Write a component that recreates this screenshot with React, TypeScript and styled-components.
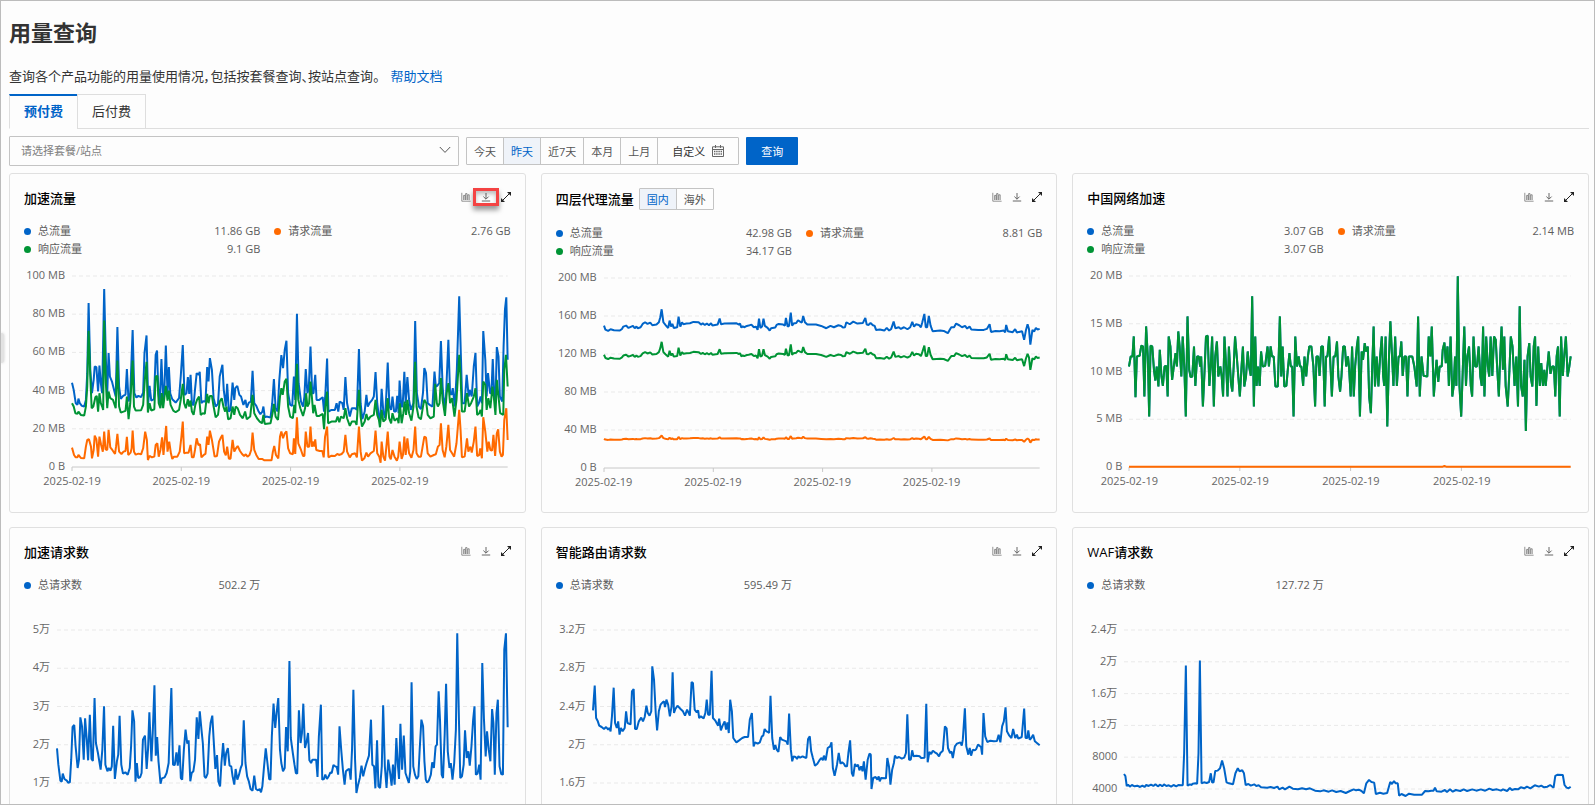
import React, { useState } from "react";
import styled, { createGlobalStyle } from "styled-components";

const BLUE = "#0064c8";
const GREEN = "#009435";
const ORANGE = "#ff6a00";

const GlobalStyle = createGlobalStyle`
  *, *::before, *::after { box-sizing: border-box; }
  body {
    margin: 0;
    background: #fdfdfd;
    color: #333;
    font-family: "Open Sans", "Noto Sans CJK SC", sans-serif;
    font-size: 11px;
    line-height: 18px;
  }
  button, select { font-family: inherit; }
`;

const Page = styled.main`
  position: relative;
  height: 100vh;
  overflow: hidden;
  border: 1px solid #bcbcbc;
  padding: 16px 5px 0 8px;
`;

const DrawerHandle = styled.span`
  position: absolute;
  left: 0;
  top: 332px;
  width: 3px;
  height: 30px;
  border-radius: 0 3px 3px 0;
  background: #e2e2e2;
  box-shadow: 0 0 3px rgba(0, 0, 0, 0.2);
`;

const PageTitle = styled.h1`
  margin: 0;
  font-size: 22px;
  line-height: 30px;
  font-weight: 700;
`;

const Description = styled.p`
  margin: 19px 0 0;
  font-size: 13px;
  line-height: 20px;
  font-feature-settings: "palt";
`;

const HelpLink = styled.a`
  margin-left: 11px;
  color: ${BLUE};
  text-decoration: none;
`;

const Tabs = styled.div`
  display: flex;
  margin-top: 8px;
  border-bottom: 1px solid #dedede;
`;

const Tab = styled.button<{ $active: boolean }>`
  height: 35px;
  margin-bottom: -1px;
  padding: 0 14px 3px;
  border: 1px solid #dedede;
  border-top: ${(p) => (p.$active ? `2px solid ${BLUE}` : "1px solid #dedede")};
  border-right-width: ${(p) => (p.$active ? "0" : "1px")};
  border-bottom-color: ${(p) => (p.$active ? "#fdfdfd" : "#dedede")};
  background: #fdfdfd;
  color: ${(p) => (p.$active ? BLUE : "#333")};
  font-size: 13px;
  font-weight: ${(p) => (p.$active ? 700 : 400)};
`;

const Toolbar = styled.div`
  display: flex;
  align-items: center;
  gap: 7px;
  margin-top: 7px;
`;

const SelectBox = styled.label`
  position: relative;
  flex: 0 1 450px;
  display: flex;
  svg {
    position: absolute;
    right: 8px;
    top: 8px;
    pointer-events: none;
  }
`;

const Select = styled.select`
  width: 100%;
  height: 30px;
  padding: 0 11px 1px;
  border: 1px solid #c4c4c4;
  border-radius: 1px;
  appearance: none;
  background: #fdfdfd;
  color: #808080;
  font-size: 11px;
`;

const ButtonGroup = styled.div`
  display: flex;
  border: 1px solid #c4c4c4;
  border-radius: 1px;
`;

const GroupButton = styled.button<{ $active?: boolean; $small?: boolean; $wide?: boolean }>`
  display: flex;
  align-items: center;
  gap: 7px;
  height: ${(p) => (p.$small ? "20px" : "26px")};
  padding: ${(p) => (p.$wide ? "0 14px" : "0 7px")};
  border: 0;
  background: ${(p) => (p.$active ? "#eff3f9" : "#fdfdfd")};
  color: ${(p) => (p.$active ? BLUE : p.$wide ? "#333" : "#555")};
  font-size: 11px;
  white-space: nowrap;
  & + & { border-left: 1px solid #c4c4c4; }
`;

const QueryButton = styled.button`
  height: 28px;
  padding: 0 15px;
  border: 0;
  border-radius: 1px;
  background: ${BLUE};
  color: #fff;
  font-size: 11px;
`;

const CardGrid = styled.section`
  display: grid;
  grid-template-columns: repeat(3, minmax(0, 1fr));
  gap: 14px 15px;
  margin-top: 7px;
`;

const Card = styled.article`
  min-height: 340px;
  padding: 14px 14px 21px;
  border: 1px solid #e0e0e0;
  border-radius: 3px;
`;

const CardHeader = styled.header`
  display: flex;
  align-items: flex-start;
`;

const CardHeading = styled.div`
  display: flex;
  align-items: center;
  gap: 5px;
  flex: 1;
`;

const CardTitle = styled.h2`
  margin: 0;
  color: #000;
  font-size: 13px;
  line-height: 20px;
  font-weight: 500;
`;

const Actions = styled.div`
  display: flex;
  gap: 10px;
`;

const IconButton = styled.button`
  position: relative;
  display: flex;
  align-items: center;
  justify-content: center;
  width: 10px;
  height: 18px;
  padding: 0;
  border: 0;
  background: none;
  color: #666;
  svg { flex: none; }
`;

const Highlight = styled.span`
  position: absolute;
  inset: 0 -8px;
  border: 3px solid #f44343;
  box-shadow: 0 4px 5px rgba(0, 0, 0, 0.4), inset 0 3px 4px rgba(0, 0, 0, 0.25);
`;

const Legend = styled.ul`
  display: grid;
  grid-template-columns: 1fr 1fr;
  grid-auto-rows: 18px;
  column-gap: 14px;
  min-height: 36px;
  margin: 14px 0 0;
  padding: 0;
  list-style: none;
  color: #5c5c5c;
`;

const LegendItem = styled.li`
  display: flex;
  align-items: center;
`;

const Dot = styled.span<{ $color: string }>`
  width: 7px;
  height: 7px;
  margin-right: 7px;
  border-radius: 50%;
  background: ${(p) => p.$color};
`;

const LegendValue = styled.span`
  margin-left: auto;
`;

const ChartGrid = styled.div<{ $axis: number }>`
  display: grid;
  grid-template-columns: ${(p) => p.$axis}px 1fr;
  margin: 18px 3px 0 0;
  color: #666;
`;

const YAxis = styled.div`
  display: flex;
  flex-direction: column;
  justify-content: space-between;
  margin: -9px 0 -7px;
  padding-right: 7px;
  text-align: right;
  line-height: 16px;
  white-space: nowrap;
`;

const Plot = styled.svg`
  display: block;
  width: 100%;
  overflow: visible;
`;

const XAxis = styled.div`
  grid-column: 2;
  display: grid;
  grid-template-columns: repeat(3, 72fr) 71fr;
  margin-top: 6px;
  line-height: 16px;
`;

const XLabel = styled.span`
  display: flex;
  justify-content: center;
  width: 0;
  white-space: nowrap;
`;

const BarsIcon = () => (
  <svg width="10" height="10" viewBox="0 0 10 10" fill="none" stroke="currentColor" strokeWidth="0.7">
    <path d="M0.8 0.8V9.2H9.6" />
    <path d="M2.6 8V3.4H4V8M4.6 8V1.6H6V8M6.8 8V2.8H8.2V8" />
  </svg>
);

const DownloadIcon = () => (
  <svg width="10" height="10" viewBox="0 0 10 10" fill="none" stroke="currentColor">
    <path d="M5 1V7M2.4 4.6L5 7.2L7.6 4.6M0.8 9H9.2" />
  </svg>
);

const ExpandIcon = () => (
  <svg width="12" height="12" viewBox="0 0 12 12" fill="#222" stroke="#222">
    <path d="M2 10L10 2" />
    <path d="M7 1H11V5ZM1 7V11H5Z" stroke="none" />
  </svg>
);

const CalendarIcon = () => (
  <svg width="12" height="12" viewBox="0 0 12 12" fill="none" stroke="#666">
    <path d="M0.5 1.8H11.5V11.5H0.5ZM0.5 4.5H11.5M3.5 0V3M8.5 0V3" />
    <path d="M2 6.5H10M2 9H10" strokeWidth="1.4" strokeDasharray="1.4 0.8" />
  </svg>
);

const ChevronIcon = () => (
  <svg width="12" height="12" viewBox="0 0 12 12" fill="none" stroke="#555">
    <path d="M0.8 3L6 8.4L11.2 3" />
  </svg>
);

type Line = { color: string; points: string };

type ChartSpec = {
  /* Plot extent in the units of the points: left, top, width, height. */
  extent: [number, number, number, number];
  height: number;
  axis: number;
  labels: string[];
  dates?: boolean;
  lines: Line[];
};

type Metric = { name: string; value: string; color: string };

type CardSpec = { title: string; regions?: boolean; marked?: boolean; metrics: Metric[]; chart: ChartSpec };

/* Scales a series towards the zero line at the given height. */
const share = (points: string, zero: number, ratio: number) =>
  points
    .split(" ")
    .map((pair) => {
      const [x, y] = pair.split(",").map(Number);
      return `${x},${Math.round((zero - (zero - y) * ratio) * 10) / 10}`;
    })
    .join(" ");

const trafficTotal =
  "214,369 219,390 225,430 230,435 233,416 237,430 243,438 250,440 255,420 259,340 263,130 268,330 273,400 278,360 281,320 286,322 291,395 295,317 299,370 303,400 309,88 314,300 318,400 322,280 326,350 332,365 338,390 343,410 348,202 353,380 358,417 365,408 372,404 376,328 381,425 386,400 393,211 398,400 404,413 410,408 418,412 424,398 428,280 434,227 439,430 443,378 448,422 456,418 461,285 465,272 469,400 473,430 478,298 483,420 487,380 491,257 496,400 500,322 504,400 510,418 520,428 530,415 535,350 541,256 546,405 552,400 556,352 560,402 564,345 568,432 573,436 577,390 582,340 588,345 591,336 596,430 601,424 608,425 613,322 617,365 621,295 627,330 632,415 638,440 645,432 650,350 658,315 662,390 668,440 672,372 677,455 682,450 688,368 693,420 696,385 702,378 708,405 713,410 720,435 726,420 730,443 736,428 742,425 747,333 752,430 758,438 765,455 770,463 776,455 779,440 783,472 788,470 800,473 805,430 810,358 815,445 821,455 826,360 832,286 837,325 842,270 847,243 852,400 858,435 864,438 869,350 873,420 878,162 883,370 890,425 896,440 900,410 904,328 909,400 913,385 918,260 923,400 927,400 932,345 936,420 944,420 950,415 954,412 958,455 962,400 967,296 971,455 980,450 990,450 995,430 1000,455 1004,425 1012,430 1016,450 1021,352 1026,430 1034,470 1040,445 1050,445 1055,450 1061,268 1066,430 1071,478 1078,455 1083,405 1087,440 1092,430 1100,420 1105,410 1110,337 1115,430 1120,470 1124,480 1128,387 1133,455 1138,475 1142,400 1146,308 1151,440 1156,450 1160,410 1165,455 1170,455 1174,408 1178,460 1181,362 1186,440 1190,440 1195,336 1199,430 1204,352 1209,420 1214,450 1222,430 1227,184 1232,400 1238,440 1244,448 1250,400 1254,325 1259,340 1264,430 1270,435 1278,440 1284,335 1288,380 1292,378 1298,370 1303,244 1308,380 1313,440 1318,410 1325,240 1330,400 1334,405 1338,385 1344,440 1350,330 1357,110 1362,290 1366,430 1373,430 1379,345 1385,410 1388,390 1394,410 1400,320 1405,279 1410,440 1415,430 1420,410 1424,430 1428,214 1434,300 1438,410 1442,340 1448,400 1452,400 1456,298 1460,400 1464,430 1468,262 1473,290 1477,410 1484,425 1488,260 1492,150 1496,113 1500,300";

const trafficRequest =
  "214,563 220,585 225,592 230,592 233,585 240,594 250,595 255,560 259,540 264,538 270,560 273,595 278,570 281,527 286,538 291,590 295,530 300,555 305,575 309,515 313,568 318,570 322,510 327,562 333,570 341,582 344,560 348,522 353,575 360,582 366,575 372,573 376,531 380,585 387,578 390,565 393,512 397,575 402,584 410,581 418,583 424,565 430,515 435,540 438,600 443,588 450,592 457,590 461,555 466,550 470,590 475,570 480,532 484,585 488,540 492,498 496,575 501,545 506,580 510,597 515,590 525,590 532,575 537,530 541,485 545,580 552,578 558,578 564,555 568,592 573,592 577,570 582,535 587,555 592,553 596,592 603,585 608,582 613,530 617,555 621,512 627,540 635,590 642,588 648,545 654,532 658,525 663,575 668,586 672,560 677,596 682,596 688,540 693,575 698,565 703,558 710,573 716,582 722,588 727,583 732,590 738,585 743,570 747,518 752,570 758,585 765,597 775,597 782,601 803,601 807,575 811,558 816,585 823,595 828,530 832,515 837,535 842,520 847,514 852,565 858,580 866,583 869,535 873,582 878,472 882,550 890,570 896,588 900,588 904,515 909,560 914,560 918,500 922,560 927,545 929,560 932,538 935,570 945,573 953,573 957,592 961,530 967,500 971,592 980,587 990,588 997,582 1002,585 1010,582 1016,575 1021,525 1026,575 1034,592 1040,583 1050,580 1055,592 1061,500 1066,575 1070,602 1077,595 1083,578 1088,590 1095,580 1105,573 1110,512 1115,580 1121,590 1125,608 1128,545 1133,590 1138,602 1142,560 1146,515 1151,590 1155,598 1160,570 1166,590 1173,602 1177,590 1181,545 1187,597 1191,585 1195,530 1199,585 1204,535 1209,580 1216,593 1222,570 1227,500 1231,580 1237,590 1244,590 1249,560 1254,530 1259,533 1264,580 1272,590 1282,585 1288,583 1294,560 1299,555 1303,490 1308,570 1314,592 1319,560 1325,495 1330,570 1336,580 1342,590 1349,550 1357,450 1361,510 1365,592 1373,590 1380,535 1384,575 1390,560 1394,578 1400,545 1405,500 1410,588 1416,585 1419,565 1424,595 1428,472 1434,515 1440,575 1444,545 1449,570 1454,572 1458,525 1463,588 1468,520 1472,508 1477,575 1482,590 1486,585 1490,480 1496,445 1500,540";

const trafficResponse =
  "214,430 219,440 224,460 230,462 233,455 240,465 250,467 255,440 259,380 263,213 268,350 272,445 277,440 283,412 287,408 291,455 295,400 299,430 303,440 306,450 309,182 314,370 318,445 322,395 327,415 335,420 343,445 348,302 353,440 358,458 372,453 376,410 381,478 386,430 393,302 397,440 402,452 418,451 424,435 429,360 434,306 438,458 443,430 448,452 457,448 461,350 466,348 470,430 475,445 479,400 483,445 487,410 491,378 496,422 500,392 505,435 513,452 520,457 530,450 535,420 541,372 545,430 550,445 556,418 560,440 564,422 568,455 573,465 578,435 583,420 589,410 594,465 600,460 606,462 613,402 617,430 621,408 627,408 632,440 638,472 645,465 650,425 656,415 661,440 666,455 670,440 675,478 682,475 688,440 693,465 697,440 703,445 710,465 718,475 725,455 730,478 740,470 747,405 752,460 760,475 768,485 775,490 779,465 783,492 800,490 806,460 810,432 815,470 822,480 828,410 832,385 836,405 842,365 847,357 852,440 858,470 866,475 870,435 873,460 878,312 882,420 888,445 896,468 902,445 905,400 909,440 914,430 918,365 922,410 926,460 930,435 936,468 944,468 954,462 958,508 962,440 967,395 970,490 980,485 993,485 998,470 1003,487 1008,470 1016,475 1021,445 1026,475 1034,498 1040,485 1050,485 1054,495 1061,390 1066,470 1070,500 1078,485 1083,462 1088,480 1095,470 1105,465 1110,420 1115,465 1120,480 1123,502 1128,450 1133,485 1140,478 1146,415 1150,475 1156,490 1160,460 1166,482 1175,475 1178,490 1182,430 1187,490 1192,460 1196,425 1200,465 1204,420 1209,460 1216,482 1222,440 1227,306 1231,440 1237,472 1244,478 1250,440 1254,420 1260,430 1264,465 1272,475 1282,470 1286,372 1291,430 1294,440 1299,430 1303,355 1308,420 1315,468 1320,400 1325,370 1330,430 1336,415 1343,470 1349,420 1357,285 1361,350 1365,455 1373,455 1380,400 1386,440 1392,430 1400,410 1405,385 1410,465 1416,460 1420,450 1424,470 1428,365 1434,375 1438,450 1443,415 1449,445 1455,380 1459,410 1464,465 1468,360 1473,410 1478,460 1487,465 1490,330 1495,285 1500,380";

const proxyTotal =
  "216,465 220,477 228,481 235,476 245,479 262,480 268,475 272,468 280,465 287,472 300,466 305,473 310,468 314,473 322,470 328,460 335,455 342,460 350,456 356,464 368,462 375,455 379,440 383,416 388,455 394,463 398,468 402,472 406,450 410,468 414,460 418,472 428,470 432,438 437,468 442,455 446,461 455,459 465,458 475,454 490,455 497,462 502,458 508,463 514,459 520,464 526,458 530,465 545,462 551,444 555,461 565,459 600,458 607,462 610,459 614,471 618,467 622,470 630,466 635,465 643,462 650,470 656,468 661,478 665,444 669,472 674,468 678,444 682,466 690,472 696,480 700,473 712,471 716,463 722,460 735,462 740,465 743,442 748,468 752,466 757,426 761,465 765,459 773,457 778,449 784,453 789,456 793,436 798,455 805,462 830,462 845,466 860,473 872,466 882,470 895,464 903,466 908,471 914,470 918,455 928,461 938,453 950,459 966,457 973,442 977,462 982,463 988,457 995,464 1000,466 1004,478 1015,477 1028,480 1035,472 1042,480 1048,475 1055,453 1060,473 1070,470 1076,475 1085,470 1095,476 1103,470 1109,454 1114,468 1120,461 1128,463 1134,470 1138,455 1144,430 1148,470 1152,470 1157,436 1162,465 1168,482 1190,480 1200,481 1212,488 1218,477 1222,470 1230,470 1236,459 1245,464 1253,470 1262,466 1268,474 1275,468 1280,477 1300,478 1316,478 1325,475 1333,461 1337,484 1350,481 1362,482 1374,480 1378,485 1381,463 1386,482 1400,485 1407,476 1412,486 1418,484 1427,482 1433,508 1438,480 1443,461 1447,475 1451,522 1457,478 1462,483 1467,472 1472,477 1478,475";

const chinaTraffic =
  "207,590 212,560 217,560 221,500 226,682 230,560 238,558 243,528 248,530 252,680 257,470 262,560 266,740 270,528 275,530 280,600 284,632 288,590 293,650 297,540 302,620 306,648 311,590 316,588 320,680 323,500 328,530 333,630 338,590 343,550 347,590 351,485 355,530 360,620 364,500 369,600 373,740 378,440 383,600 387,622 392,620 397,530 401,648 406,560 411,560 415,590 418,560 423,710 428,600 432,500 437,498 442,648 446,590 450,500 455,710 459,560 464,515 468,620 474,590 478,620 482,680 486,500 491,590 495,680 499,530 505,640 509,665 513,590 517,500 522,560 531,680 536,590 540,530 544,650 549,620 554,545 558,590 563,618 567,380 572,710 576,500 580,648 584,590 589,648 593,545 598,590 605,588 612,530 616,590 621,530 625,560 630,560 635,650 642,650 648,440 652,620 656,530 661,650 667,648 672,590 676,550 680,590 684,590 688,740 693,500 698,590 703,560 707,590 711,590 716,648 720,560 725,620 730,560 734,530 740,530 746,590 751,710 755,560 760,560 764,618 769,530 774,530 779,710 783,560 787,560 792,500 796,590 800,680 805,560 810,560 815,515 819,620 824,665 828,620 833,530 838,530 842,590 847,560 850,590 855,680 859,530 864,680 868,590 873,530 877,500 882,740 887,545 891,570 896,520 900,545 905,530 909,680 914,730 918,590 922,470 926,650 931,560 936,650 941,560 946,500 950,618 953,648 957,500 962,770 967,560 971,455 976,560 980,648 985,500 990,648 995,560 999,560 1003,515 1007,618 1012,560 1017,560 1021,680 1025,560 1035,560 1041,590 1048,650 1052,440 1057,680 1062,560 1068,618 1079,620 1083,500 1088,560 1092,470 1098,680 1102,620 1106,570 1111,636 1115,590 1121,590 1124,540 1129,518 1133,580 1138,530 1142,648 1147,500 1152,680 1156,648 1160,560 1164,648 1168,320 1173,650 1178,740 1183,590 1187,470 1192,648 1196,560 1201,530 1206,648 1210,680 1214,500 1219,590 1224,590 1229,530 1234,620 1238,648 1242,470 1246,680 1251,500 1256,590 1260,620 1264,500 1269,618 1274,500 1279,510 1283,590 1288,680 1292,560 1296,470 1300,600 1304,500 1308,648 1314,710 1319,600 1323,500 1328,530 1334,648 1339,560 1344,710 1349,410 1353,648 1358,680 1363,570 1367,783 1372,560 1377,520 1381,620 1386,650 1390,530 1394,500 1398,708 1403,530 1408,648 1412,580 1417,648 1421,600 1425,648 1430,590 1434,545 1439,612 1444,590 1449,590 1453,680 1457,560 1461,530 1466,740 1470,500 1475,618 1479,560 1484,500 1489,620 1494,590 1498,560";

const requestTotal =
  "168,686 172,735 178,783 182,786 185,762 190,778 197,783 201,789 206,788 210,720 214,622 219,616 223,680 229,745 233,720 237,593 242,620 247,720 251,596 256,660 260,722 265,585 270,718 274,724 279,535 283,670 289,700 297,750 302,690 307,560 311,735 317,755 321,745 326,753 330,740 334,618 339,778 345,725 349,705 353,588 358,735 363,762 370,758 377,765 383,745 387,680 391,572 396,605 400,786 404,730 408,775 414,772 418,760 422,660 428,648 433,748 437,690 441,578 447,725 451,640 456,497 460,708 464,652 468,725 474,792 478,776 486,773 492,760 498,730 502,610 506,505 511,735 516,736 521,698 525,738 530,677 534,775 538,780 543,690 548,630 553,672 557,662 562,785 566,760 571,755 576,720 581,593 586,658 590,575 595,630 599,670 604,770 608,775 613,762 618,650 622,610 627,588 631,660 636,748 641,706 645,785 650,800 654,730 659,670 664,738 668,700 673,685 678,738 683,740 687,770 692,795 696,748 701,780 706,765 711,745 715,735 720,602 725,730 730,770 735,785 740,808 746,813 751,768 756,808 762,812 767,808 771,818 775,800 780,740 785,686 790,730 795,778 799,780 803,650 808,552 813,625 817,580 822,535 827,690 831,730 836,755 841,745 845,622 850,695 855,424 859,655 865,700 870,735 874,760 878,762 883,572 888,670 892,640 896,552 901,685 906,665 910,640 914,722 919,730 923,720 934,720 938,772 942,650 948,555 952,780 957,778 961,765 966,778 971,770 976,758 980,760 985,736 990,740 995,742 999,765 1003,620 1008,690 1013,750 1018,795 1022,755 1027,750 1032,748 1036,780 1040,690 1044,510 1049,720 1053,820 1058,795 1063,775 1068,738 1073,770 1078,748 1083,730 1090,708 1096,600 1100,735 1105,740 1109,806 1114,662 1118,800 1123,805 1128,740 1132,557 1137,740 1142,805 1147,720 1152,755 1157,798 1161,735 1166,795 1171,655 1175,730 1179,778 1183,612 1188,750 1193,648 1198,760 1203,775 1208,790 1212,755 1216,488 1221,740 1226,765 1231,778 1236,770 1240,690 1245,600 1250,620 1254,725 1258,780 1262,789 1267,783 1273,765 1277,728 1282,745 1287,680 1291,675 1296,515 1300,600 1305,765 1309,775 1314,640 1318,492 1323,695 1328,745 1332,730 1337,780 1342,730 1347,630 1351,341 1356,600 1360,775 1365,770 1370,735 1374,632 1379,715 1384,695 1388,738 1393,680 1398,600 1402,560 1406,765 1411,762 1416,735 1420,780 1425,430 1430,600 1435,710 1439,635 1444,690 1449,725 1454,568 1458,610 1462,765 1467,580 1471,540 1476,740 1481,763 1486,765 1490,390 1495,341 1500,623";

const routeTotal =
  "182,572 187,498 191,595 196,605 200,618 207,622 214,628 220,622 226,630 230,625 233,635 237,590 242,504 246,610 251,625 255,605 259,645 263,625 268,635 274,625 278,575 282,610 291,614 295,515 300,508 304,628 309,628 315,605 322,594 327,605 332,592 337,558 341,580 346,588 351,575 354,440 359,480 364,580 368,632 373,575 378,555 384,548 388,545 391,562 395,540 400,555 405,590 410,560 413,458 417,580 421,568 427,558 436,568 443,575 449,588 455,570 463,588 468,487 472,490 477,570 483,578 487,572 490,595 495,590 503,596 508,580 512,540 516,585 521,585 526,453 530,595 537,603 545,618 548,597 553,632 558,618 564,605 568,630 572,608 576,640 580,540 585,575 589,655 598,668 606,662 615,655 622,652 632,652 637,600 643,580 648,680 652,668 660,672 666,668 672,650 676,648 680,628 685,635 690,637 693,640 697,528 702,655 707,690 711,676 715,690 720,697 725,652 730,660 743,665 747,675 751,582 756,690 760,725 764,710 770,712 774,718 778,710 783,714 790,710 794,712 801,715 806,658 811,650 815,695 820,715 826,738 833,732 840,720 845,715 849,722 852,708 857,722 863,685 870,680 874,668 878,745 883,768 890,735 895,700 900,732 905,728 910,732 914,740 919,740 923,700 928,662 933,760 937,770 942,733 947,740 951,735 955,752 960,740 964,755 968,725 973,780 979,720 984,702 988,705 990,808 995,775 1002,772 1007,780 1011,770 1014,785 1018,775 1032,776 1036,715 1041,742 1045,795 1050,750 1055,730 1058,708 1063,715 1070,712 1078,717 1085,714 1090,700 1094,584 1099,720 1104,720 1108,692 1112,710 1120,708 1130,710 1134,715 1144,714 1149,552 1153,728 1158,697 1163,703 1168,693 1174,698 1180,702 1186,710 1190,700 1197,693 1203,620 1208,626 1212,685 1218,700 1222,695 1226,715 1232,680 1238,672 1248,668 1252,678 1255,660 1261,566 1265,680 1271,705 1275,685 1279,708 1284,690 1290,692 1294,688 1299,675 1303,678 1308,682 1311,705 1315,580 1320,650 1326,667 1335,663 1345,665 1354,664 1359,645 1364,668 1369,620 1374,605 1379,563 1383,635 1390,648 1396,655 1401,628 1407,655 1412,645 1416,657 1426,652 1433,567 1437,655 1442,655 1445,632 1449,660 1454,655 1459,645 1464,665 1470,670 1478,677";

const wafTotal =
  "191,762 195,768 199,798 203,794 208,800 214,795 222,799 230,797 238,801 245,797 251,801 256,795 263,798 270,794 277,798 283,793 290,799 297,794 303,799 308,793 315,798 322,796 329,800 336,795 344,799 350,795 358,796 363,796 367,700 372,437 377,797 384,793 389,795 392,791 400,790 405,791 409,700 413,422 418,790 425,787 433,789 440,786 445,760 449,788 453,787 458,753 465,752 472,745 478,722 484,745 491,787 498,790 510,793 517,760 524,745 529,754 537,751 542,760 547,795 555,792 562,797 572,793 578,798 585,796 592,802 610,803 620,801 630,804 640,800 645,808 655,803 662,808 675,800 685,806 700,808 712,805 724,808 735,805 750,812 765,814 775,811 790,815 800,811 812,816 825,813 840,819 852,813 863,808 870,811 878,809 886,813 893,820 900,790 908,780 915,786 923,788 928,822 940,818 950,821 961,819 970,786 975,792 981,783 986,790 992,790 996,827 1003,822 1015,828 1025,821 1040,824 1063,824 1072,813 1082,814 1090,812 1097,812 1101,803 1106,814 1120,815 1130,810 1136,816 1145,808 1153,815 1162,810 1175,813 1185,808 1195,813 1210,808 1222,812 1235,808 1248,812 1260,806 1270,810 1282,808 1294,812 1300,808 1312,813 1320,804 1326,810 1335,807 1344,808 1352,802 1362,805 1370,800 1380,805 1393,796 1405,800 1412,797 1420,802 1430,800 1438,795 1448,803 1453,768 1460,764 1475,765 1480,795 1486,803 1492,805 1498,800";

const flow = (total: string, request: string, response: string): Metric[] => [
  { name: "总流量", value: total, color: BLUE },
  { name: "请求流量", value: request, color: ORANGE },
  { name: "响应流量", value: response, color: GREEN },
];

const requests = (value: string): Metric[] => [{ name: "总请求数", value, color: BLUE }];

const cards: CardSpec[] = [
  {
    title: "加速流量",
    marked: true,
    metrics: flow("11.86 GB", "2.76 GB", "9.1 GB"),
    chart: {
      extent: [214, 49, 1286, 572],
      height: 191,
      axis: 48,
      dates: true,
      labels: ["100 MB", "80 MB", "60 MB", "40 MB", "20 MB", "0 B"],
      lines: [
        { color: BLUE, points: trafficTotal },
        { color: ORANGE, points: trafficRequest },
        { color: GREEN, points: trafficResponse },
      ],
    },
  },
  {
    title: "四层代理流量",
    regions: true,
    metrics: flow("42.98 GB", "8.81 GB", "34.17 GB"),
    chart: {
      extent: [216, 322, 1262, 571],
      height: 190,
      axis: 48,
      dates: true,
      labels: ["200 MB", "160 MB", "120 MB", "80 MB", "40 MB", "0 B"],
      lines: [
        { color: BLUE, points: proxyTotal },
        { color: ORANGE, points: share(proxyTotal, 893, 0.205) },
        { color: GREEN, points: share(proxyTotal, 893, 0.795) },
      ],
    },
  },
  {
    title: "中国网络加速",
    metrics: flow("3.07 GB", "2.14 MB", "3.07 GB"),
    chart: {
      extent: [207, 319, 1291, 572],
      height: 191,
      axis: 42,
      dates: true,
      labels: ["20 MB", "15 MB", "10 MB", "5 MB", "0 B"],
      lines: [
        { color: BLUE, points: chinaTraffic },
        { color: ORANGE, points: "207,890 1124,890 1129,888 1134,890 1498,890" },
        { color: GREEN, points: chinaTraffic },
      ],
    },
  },
  {
    title: "加速请求数",
    metrics: requests("502.2 万"),
    chart: {
      extent: [168, 331, 1332, 459],
      height: 153,
      axis: 33,
      labels: ["5万", "4万", "3万", "2万", "1万"],
      lines: [{ color: BLUE, points: requestTotal }],
    },
  },
  {
    title: "智能路由请求数",
    metrics: requests("595.49 万"),
    chart: {
      extent: [182, 331, 1296, 459],
      height: 153,
      axis: 37,
      labels: ["3.2万", "2.8万", "2.4万", "2万", "1.6万"],
      lines: [{ color: BLUE, points: routeTotal }],
    },
  },
  {
    title: "WAF请求数",
    metrics: requests("127.72 万"),
    chart: {
      extent: [191, 331, 1307, 476],
      height: 159,
      axis: 37,
      labels: ["2.4万", "2万", "1.6万", "1.2万", "8000", "4000"],
      lines: [{ color: BLUE, points: wafTotal }],
    },
  },
];

function Chart({ extent, height, axis, labels, dates, lines }: ChartSpec) {
  const [left, top, width, depth] = extent;
  const bottom = top + depth;
  const gridLabels = dates ? labels.slice(0, -1) : labels;
  return (
    <ChartGrid $axis={axis}>
      <YAxis>
        {labels.map((label) => (
          <span key={label}>{label}</span>
        ))}
      </YAxis>
      <Plot height={height} viewBox={extent.join(" ")} preserveAspectRatio="none" fill="none">
        {gridLabels.map((label, i) => {
          const y = top + (depth * i) / (labels.length - 1);
          return (
            <path
              key={label}
              d={`M${left} ${y}H${left + width}`}
              stroke="#e9e9e9"
              strokeDasharray="4 3"
              vectorEffect="non-scaling-stroke"
            />
          );
        })}
        {dates && (
          <path
            d={`M${left} ${bottom}H${left + width}${[0, 72, 144, 216]
              .map((n) => `M${left + (width * n) / 287} ${bottom}v12`)
              .join("")}`}
            stroke="#c8c8c8"
            vectorEffect="non-scaling-stroke"
          />
        )}
        {lines.map((line) => (
          <polyline
            key={line.color}
            points={line.points}
            stroke={line.color}
            strokeWidth="2"
            strokeLinejoin="bevel"
            vectorEffect="non-scaling-stroke"
          />
        ))}
      </Plot>
      {dates && (
        <XAxis>
          {[0, 1, 2, 3].map((n) => (
            <XLabel key={n}>2025-02-19</XLabel>
          ))}
        </XAxis>
      )}
    </ChartGrid>
  );
}

function UsageCard({ title, regions, marked, metrics, chart }: CardSpec) {
  const [region, setRegion] = useState("国内");
  return (
    <Card>
      <CardHeader>
        <CardHeading>
          <CardTitle>{title}</CardTitle>
          {regions && (
            <ButtonGroup>
              {["国内", "海外"].map((name) => (
                <GroupButton key={name} type="button" $small $active={name === region} onClick={() => setRegion(name)}>
                  {name}
                </GroupButton>
              ))}
            </ButtonGroup>
          )}
        </CardHeading>
        <Actions>
          <IconButton type="button" aria-label="图表">
            <BarsIcon />
          </IconButton>
          <IconButton type="button" aria-label="下载">
            <DownloadIcon />
            {marked && <Highlight />}
          </IconButton>
          <IconButton type="button" aria-label="放大">
            <ExpandIcon />
          </IconButton>
        </Actions>
      </CardHeader>
      <Legend>
        {metrics.map((metric) => (
          <LegendItem key={metric.name}>
            <Dot $color={metric.color} />
            {metric.name}
            <LegendValue>{metric.value}</LegendValue>
          </LegendItem>
        ))}
      </Legend>
      <Chart {...chart} />
    </Card>
  );
}

export default function App() {
  const [tab, setTab] = useState("预付费");
  const [range, setRange] = useState("昨天");
  return (
    <>
      <GlobalStyle />
      <Page>
        <DrawerHandle />
        <PageTitle>用量查询</PageTitle>
        <Description>
          查询各个产品功能的用量使用情况，包括按套餐查询、按站点查询。
          <HelpLink href="#help">帮助文档</HelpLink>
        </Description>
        <Tabs role="tablist">
          {["预付费", "后付费"].map((name) => (
            <Tab key={name} type="button" role="tab" aria-selected={name === tab} $active={name === tab} onClick={() => setTab(name)}>
              {name}
            </Tab>
          ))}
        </Tabs>
        <Toolbar>
          <SelectBox>
            <Select aria-label="套餐/站点" defaultValue="">
              <option value="">请选择套餐/站点</option>
            </Select>
            <ChevronIcon />
          </SelectBox>
          <ButtonGroup>
            {["今天", "昨天", "近7天", "本月", "上月"].map((name) => (
              <GroupButton key={name} type="button" $active={name === range} onClick={() => setRange(name)}>
                {name}
              </GroupButton>
            ))}
            <GroupButton type="button" $wide>
              自定义
              <CalendarIcon />
            </GroupButton>
          </ButtonGroup>
          <QueryButton type="button">查询</QueryButton>
        </Toolbar>
        <CardGrid>
          {cards.map((card) => (
            <UsageCard key={card.title} {...card} />
          ))}
        </CardGrid>
      </Page>
    </>
  );
}
